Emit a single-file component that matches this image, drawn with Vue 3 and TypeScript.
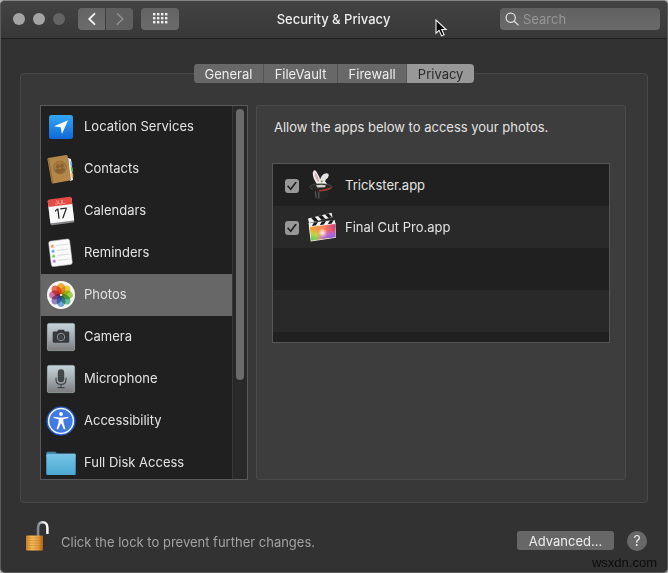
<script setup lang="ts">
import { ref } from 'vue'

interface Service { id: string; label: string }
interface AppEntry { id: string; name: string; allowed: boolean }

const tabs: string[] = ['General', 'FileVault', 'Firewall', 'Privacy']
const activeTab = ref('Privacy')

const services: Service[] = [
  { id: 'location', label: 'Location Services' },
  { id: 'contacts', label: 'Contacts' },
  { id: 'calendars', label: 'Calendars' },
  { id: 'reminders', label: 'Reminders' },
  { id: 'photos', label: 'Photos' },
  { id: 'camera', label: 'Camera' },
  { id: 'microphone', label: 'Microphone' },
  { id: 'accessibility', label: 'Accessibility' },
  { id: 'disk', label: 'Full Disk Access' },
]
const selected = ref('photos')

const apps = ref<AppEntry[]>([
  { id: 'trickster', name: 'Trickster.app', allowed: true },
  { id: 'finalcut', name: 'Final Cut Pro.app', allowed: true },
])

const petals: string[] = ['#f9a01b', '#e8d21d', '#9ccb3b', '#4fb58a', '#5a9bd8', '#8273b8', '#c9609b', '#ef5b45']
const search = ref('')
</script>

<template>
  <main class="window">
    <header class="titlebar">
      <div class="lights">
        <button class="light" aria-label="Close"></button>
        <button class="light" aria-label="Minimize"></button>
        <button class="light dim" aria-label="Zoom" disabled></button>
      </div>
      <div class="history">
        <button class="tool back" aria-label="Back">
          <svg width="10" height="14" viewBox="0 0 10 14"><path d="M7.5 1.8 2.2 7l5.3 5.2" fill="none" stroke="#f4f4f4" stroke-width="1.8" stroke-linecap="round" stroke-linejoin="round" /></svg>
        </button>
        <button class="tool forward" aria-label="Forward" disabled>
          <svg width="10" height="14" viewBox="0 0 10 14"><path d="M2.5 1.8 7.8 7l-5.3 5.2" fill="none" stroke="#8f8f8f" stroke-width="1.6" stroke-linecap="round" stroke-linejoin="round" /></svg>
        </button>
      </div>
      <button class="tool all" aria-label="Show All">
        <svg width="15" height="11" viewBox="0 0 15 11" fill="#f0f0f0">
          <template v-for="r in 3" :key="r">
            <rect v-for="c in 4" :key="c" :x="(c - 1) * 4" :y="(r - 1) * 4" width="2.4" height="2.4" />
          </template>
        </svg>
      </button>
      <h1 class="title">Security &amp; Privacy</h1>
      <label class="search">
        <svg width="14" height="14" viewBox="0 0 14 14" fill="none" stroke="#dcdcdc" stroke-width="1.3" stroke-linecap="round"><circle cx="5.7" cy="5.7" r="4.6" /><path d="m9.2 9.2 3.9 3.7" /></svg>
        <input v-model="search" type="text" placeholder="Search" aria-label="Search" />
      </label>
    </header>

    <div class="content">
      <nav class="tabs" role="tablist">
        <button v-for="tab in tabs" :key="tab" class="tab" role="tab" :class="{ active: tab === activeTab }" :aria-selected="tab === activeTab" @click="activeTab = tab">{{ tab }}</button>
      </nav>

      <section class="group">
        <div class="sidebar">
          <ul class="services">
            <li v-for="s in services" :key="s.id">
              <button class="service" :class="{ selected: s.id === selected }" @click="selected = s.id">
                <svg class="icon" viewBox="0 0 30 30" aria-hidden="true">
                  <template v-if="s.id === 'location'">
                    <defs><linearGradient id="loc" x2="0" y2="1"><stop stop-color="#32a6f5" /><stop offset="1" stop-color="#1168d8" /></linearGradient></defs>
                    <rect x="3" y="3" width="24" height="24" rx="2.5" fill="url(#loc)" />
                    <path d="M22 8.2 16 22l-1.4-6.7L8 14.2z" fill="#fff" />
                  </template>
                  <template v-else-if="s.id === 'contacts'">
                    <path d="m22 4 3 1 2 21-3 1z" fill="#e9edf0" />
                    <path d="m24.2 7 1.7.5.4 4-1.7.4z" fill="#58b6e5" /><path d="m24.8 13 1.9.4.4 4-1.8.3z" fill="#61b848" /><path d="m25.4 19 1.7.3.3 4-1.7.3z" fill="#e1a43a" />
                    <path d="M2.2 3.9 20 1q1.4-.2 1.7 1.2l3.2 23q.1 1-1 1.2L7.2 29.5q-1.3.2-1.6-1.1L1.4 5.2q-.1-1.1.8-1.3z" fill="#b38748" />
                    <path d="m2.6 5 4.1 23.8" stroke="#8c642e" stroke-width="1" />
                    <circle cx="14" cy="13.5" r="6.4" fill="#a67b40" stroke="#936a35" stroke-width=".8" />
                    <g fill="#86602f"><ellipse cx="11.9" cy="12.2" rx="1.7" ry="2.2" /><ellipse cx="16" cy="11.7" rx="1.7" ry="2.2" /><path d="M8.8 17q.5-2.3 3-2.5 1.2 0 2.1.9.8-1.2 2.3-1.4 2.4 0 3 2-1.8 3-4.7 3.4-3.4.3-5.7-2.4z" /></g>
                  </template>
                  <template v-else-if="s.id === 'calendars'">
                    <g transform="rotate(-7 15 15)">
                      <rect x="3" y="4" width="24" height="24" rx="1.5" fill="#85888b" /><rect x="3" y="3" width="24" height="23" rx="1" fill="#f8f8f8" />
                      <path d="M3 9.5V4q0-2 1.5-2h21Q27 2 27 4v5.500z" fill="#e54b43" />
                      <text x="15" y="8.2" text-anchor="middle" font-size="5.500" fill="#ffc5c0">JUL</text>
                      <text x="15" y="22.5" text-anchor="middle" font-size="14" fill="#222">17</text>
                    </g>
                  </template>
                  <template v-else-if="s.id === 'reminders'">
                    <g transform="rotate(-7 15 15)">
                      <rect x="4" y="2" width="21" height="25.500" rx="2" fill="#fafafa" stroke="#ccc" stroke-width=".6" />
                      <path d="M11 7h12M11 12h12M11 17h12M11 22h12" stroke="#cfd2d4" stroke-width=".7" />
                      <g stroke-width=".7"><circle cx="7.3" cy="7.2" r="1.5" fill="#ed9358" stroke="#f5c9a9" /><circle cx="7.3" cy="12.4" r="1.5" fill="#4da2e3" stroke="#b8daf4" /><circle cx="7.3" cy="17.4" r="1.5" fill="#6cc65a" stroke="#c4e8bd" /><circle cx="7.3" cy="22.4" r="1.5" fill="#b175d2" stroke="#dfc5eb" /></g>
                    </g>
                  </template>
                  <template v-else-if="s.id === 'photos'">
                    <circle cx="15" cy="15" r="14" fill="#f7f7f5" />
                    <ellipse v-for="(color, i) in petals" :key="color" class="petal" cx="15" cy="8.8" rx="4.4" ry="5.800" :fill="color" fill-opacity=".85" :transform="`rotate(${i * 45} 15 15)`" />
                    <circle cx="15" cy="15" r="1" fill="#fff" />
                  </template>
                  <template v-else-if="s.id === 'camera' || s.id === 'microphone'">
                    <defs><linearGradient :id="`${s.id}-bg`" x2="0" y2="1"><stop stop-color="#c4d4da" /><stop offset=".55" stop-color="#a1a8ad" /><stop offset="1" stop-color="#7c7b7d" /></linearGradient></defs>
                    <rect x="1.4" y="1.4" width="27.2" height="27.2" rx="1.6" :fill="`url(#${s.id}-bg)`" stroke="#b7c1c5" stroke-width=".6" />
                    <template v-if="s.id === 'camera'">
                      <path d="M8 9.5h3l1.2-1.8h5.6L19 9.5h3q1.3 0 1.3 1.3v8.700q0 1.3-1.3 1.3H8q-1.3 0-1.3-1.3v-8.700q0-1.3 1.3-1.3z" fill="#36393b" />
                      <circle cx="15" cy="15" r="3.7" fill="#303436" stroke="#9ca3a7" stroke-width=".9" /><circle cx="15" cy="15" r="2" fill="#454b4e" />
                    </template>
                    <template v-else>
                      <rect x="11.8" y="5.2" width="6.4" height="13" rx="3.2" fill="#3f4548" />
                      <path d="M10 13.7v1.8q0 5 5 5t5-5v-1.8M15 20.5v2.7M11.5 23.600h7" fill="none" stroke="#3f4548" stroke-width="1.2" />
                      <path d="M13 8h4M13 10.3h4M13 12.6h4" stroke="#596064" stroke-width=".5" />
                    </template>
                  </template>
                  <template v-else-if="s.id === 'accessibility'">
                    <circle cx="15" cy="15" r="14.6" fill="#265ec7" />
                    <circle cx="15" cy="15" r="12.4" fill="#3f7be2" stroke="#f2f6ff" stroke-width="1.5" />
                    <circle cx="15" cy="8" r="1.9" fill="#fff" />
                    <path d="m7.800 10.700 5.400.7h3.600l5.400-.7.2 1.300-5.100 1.200.2 3.300 1.900 6.500-1.500.6-2.500-5.900h-.8l-2.500 5.900-1.500-.6 1.900-6.500.2-3.300-5.100-1.200z" fill="#fff" />
                  </template>
                  <template v-else>
                    <defs><linearGradient id="folder" x2="0" y2="1"><stop stop-color="#76c4e7" /><stop offset="1" stop-color="#4ba8d2" /></linearGradient></defs>
                    <path d="M.4 6V4.700q0-1 1-1h7.800q.8 0 1.500 1.500h17.900q1 0 1 1V9H.4z" fill="#4286a8" />
                    <rect x=".3" y="6.200" width="29.4" height="20.800" rx="1" fill="url(#folder)" />
                    <path d="M.8 6.700h28.4" stroke="#91d2ed" stroke-width=".6" />
                  </template>
                </svg>
                <span>{{ s.label }}</span>
              </button>
            </li>
          </ul>
          <div class="track"><div class="thumb"></div></div>
        </div>

        <div class="panel">
          <p class="prompt">Allow the apps below to access your photos.</p>
          <ul class="apps">
            <li v-for="app in apps" :key="app.id">
              <label class="app">
                <input v-model="app.allowed" class="check" type="checkbox" />
                <svg v-if="app.id === 'trickster'" class="icon" viewBox="0 0 30 30" aria-hidden="true">
                  <path d="M10.500 15Q4.800 7 6 2 7.200-1.200 9.500 1.700q3 4.300 4.800 11.300z" fill="#eee9e9" />
                  <path d="M11.2 12Q7.400 6.500 7.900 2.600q2.300 2 4.400 8.900z" fill="#d9a3ad" />
                  <path d="M12.500 13Q12.800 6.500 17.300 3.800q4.600-1.600 4.500 1.800-.3 2.200-3.200 4.100L17.500 15z" fill="#e5e3e2" />
                  <path d="M10 16.800q-.4-4.900 4-5.500 5.900-.4 6.400 4.300l-2 1.900z" fill="#f4f1ef" /><ellipse cx="14.800" cy="11.400" rx="1.100" ry=".9" fill="#6c9034" />
                  <ellipse cx="14" cy="17" rx="11.200" ry="3.300" fill="#282828" stroke="#5d5d5d" stroke-width=".6" />
                  <path d="M9 15.300q5.700-1.200 10 .1l-1 1.800-7.700.2z" fill="#d8d2cf" />
                  <path d="M5.900 18q8.200 3.200 16.200-.2l-1 10.400q-6 3.600-13.300.5z" fill="#242424" />
                  <path d="M12 20q7.300-.4 12.300-3.500l-1.700 3q-4.900 2.100-10.600 2.100z" fill="#b73730" />
                  <path d="M8.500 21.200q.1 4.400.8 6.700M11.800 21.800v6.700" fill="none" stroke="#595959" stroke-width="1.200" />
                </svg>
                <svg v-else class="icon" viewBox="0 0 30 30" aria-hidden="true">
                  <defs>
                    <linearGradient id="clap" x2="1" y2="0"><stop stop-color="#eea52c" /><stop offset=".5" stop-color="#f48a58" /><stop offset="1" stop-color="#df3b77" /></linearGradient>
                    <radialGradient id="green" cx="0" cy="1" r=".8"><stop stop-color="#27d75e" /><stop offset=".55" stop-color="#b8df4f" stop-opacity=".8" /><stop offset="1" stop-color="#e9b54f" stop-opacity="0" /></radialGradient>
                    <radialGradient id="violet" cx=".9" cy="1" r=".7"><stop stop-color="#4b61ef" /><stop offset=".6" stop-color="#b66bea" stop-opacity=".8" /><stop offset="1" stop-color="#df5ba0" stop-opacity="0" /></radialGradient>
                    <radialGradient id="glow"><stop stop-color="#fff" stop-opacity=".9" /><stop offset="1" stop-color="#fff" stop-opacity="0" /></radialGradient>
                  </defs>
                  <path d="m1 6.400 23.600-5.600.9 4.500L2 11z" fill="#f0f0ef" />
                  <path d="m4 5.700 3.700-.9 3.600 3.900-3.800.9zM11 4l3.800-.9L18.400 7l-3.700.9zM18 2.400l3.700-.9 3.400 3.700-3.500.9z" fill="#18191b" />
                  <path d="M1.500 11 27.600 8l1 4.300L2.200 15.500z" fill="#f0f0ef" />
                  <path d="m4 15.200 3-4.800 4-.5-3 4.900zM12 14.300l3-4.900 4-.5-3 4.900zM20 13.300l3-4.800 3.800-.5-3 4.900z" fill="#18191b" />
                  <path d="m1.800 14.300 26.600-3 .5 14.400-25.200 3.700z" fill="#f2efed" />
                  <path d="m2.900 14.900 25-2.800.4 12.900-23.800 3.400z" fill="url(#clap)" /><path d="m2.900 14.900 25-2.800.4 12.900-23.800 3.400z" fill="url(#green)" /><path d="m2.900 14.900 25-2.800.4 12.900-23.800 3.400z" fill="url(#violet)" />
                  <circle cx="15.600" cy="20.700" r="4.500" fill="url(#glow)" />
                </svg>
                <span>{{ app.name }}</span>
              </label>
            </li>
          </ul>
        </div>
      </section>

      <footer class="footer">
        <button class="lock" aria-label="Lock">
          <svg width="32" height="32" viewBox="0 0 32 32">
            <defs>
              <linearGradient id="brass"><stop stop-color="#d48127" /><stop offset=".35" stop-color="#f7bd5e" /><stop offset=".75" stop-color="#e39b3a" /><stop offset="1" stop-color="#a96216" /></linearGradient>
              <linearGradient id="steel"><stop stop-color="#7c868d" /><stop offset=".5" stop-color="#d8e0e4" /><stop offset="1" stop-color="#fff" /></linearGradient>
            </defs>
            <path d="M18 17V9q0-5.700 4.700-5.700T27.400 9v6" fill="none" stroke="url(#steel)" stroke-width="2.500" />
            <rect x="6" y="16.500" width="17" height="15" rx=".7" fill="url(#brass)" />
            <path d="M6 19h17M6 21.500h17M6 24h17M6 26.500h17M6 29h17" stroke="#a96519" stroke-opacity=".55" stroke-width=".7" />
          </svg>
        </button>
        <p class="hint">Click the lock to prevent further changes.</p>
        <div class="actions">
          <button class="advanced">Advanced...</button>
          <button class="help" aria-label="Help">?</button>
        </div>
      </footer>
    </div>

    <span class="watermark">wsxdn.com</span>
    <svg class="pointer" width="13" height="19" viewBox="0 0 13 19" aria-hidden="true"><path d="M1 1v13.200l3.100-2.800 2.400 5.500 2.600-1.100-2.400-5.300h4.400z" fill="#080808" stroke="#f1f1f1" stroke-width="1.100" /></svg>
  </main>
</template>

<style>
body { background: #b5b5b5; }
</style>

<style scoped>
* { box-sizing: border-box; }
.window {
  position: relative;
  min-height: 100vh;
  border: 1px solid #5c5c5c;
  border-top-color: #858585;
  border-radius: 5px;
  overflow: hidden;
  background: #323232;
  color: #e3e3e3;
  font: 13px/16px Inter, "Liberation Sans", sans-serif;
}
button, input { font: inherit; color: inherit; margin: 0; }
button { border: 0; padding: 0; background: none; }
ul { list-style: none; margin: 0; padding: 0; }
p, h1 { margin: 0; }
svg { display: block; flex: none; }
.titlebar {
  display: grid;
  grid-template-columns: auto auto auto 1fr 160px;
  align-items: center;
  height: 38px;
  padding: 0 7px 2px 12px;
  border-bottom: 1px solid #202020;
  background: linear-gradient(#434343, #383838);
}
.lights { display: flex; gap: 8px; margin-right: 13px; }
.light { width: 12px; height: 12px; border-radius: 50%; background: #a4a4a4; }
.light.dim { background: #646464; }
.history { display: flex; gap: 1px; margin-right: 8px; }
.tool {
  display: flex;
  align-items: center;
  justify-content: center;
  width: 27px;
  height: 22px;
  background: linear-gradient(#646464, #6b6b6b);
}
.back { border-radius: 4px 0 0 4px; }
.forward { border-radius: 0 4px 4px 0; background: #5f5f5f; }
.all { width: 38px; border-radius: 4px; }
.title { padding-right: 12px; text-align: center; font-size: 13px; font-weight: 500; color: #ececec; }
.search {
  display: flex;
  align-items: center;
  gap: 4px;
  height: 22px;
  padding: 0 5px;
  border-radius: 4px;
  background: linear-gradient(#606060, #6b6b6b);
}
.search input { flex: 1; min-width: 0; border: 0; padding: 0; outline: 0; background: none; }
.search input::placeholder { color: #969696; opacity: 1; }
.content { padding: 25px 19px 0; }
.tabs {
  position: relative;
  z-index: 1;
  display: flex;
  gap: 1px;
  width: 280px;
  margin: 0 auto;
  border-radius: 4px;
  overflow: hidden;
  background: #555;
}
.tab { flex: 1 1 auto; height: 19px; background: #686868; color: #ededed; }
.tab.active { background: #989898; color: #292929; }
.group {
  display: flex;
  gap: 8px;
  margin-top: -10px;
  padding: 31px 21px 22px 19px;
  border: 1px solid #484848;
  border-radius: 4px;
  background: #383838;
}
.sidebar {
  display: flex;
  flex: none;
  width: 208px;
  height: 375px;
  border: 1px solid #5a5a5a;
  overflow: hidden;
  background: #202020;
}
.services { flex: 1; }
.service { display: flex; align-items: center; gap: 8px; width: 100%; height: 42px; padding-left: 5px; text-align: left; }
.service span { padding-bottom: 2px; }
.service.selected { background: #676767; }
.icon { width: 30px; height: 30px; }
.petal { mix-blend-mode: multiply; }
.track { width: 15px; padding: 3px 3px 0; border-left: 1px solid #383838; background: #292929; }
.thumb { height: 271px; width: 8px; border-radius: 4px; background: #6b6b6b; }
.panel { flex: 1; padding: 13px 15px 0; border: 1px solid #4b4b4b; border-radius: 3px; background: #3d3d3d; }
.prompt { padding-left: 2px; }
.apps {
  height: 180px;
  margin-top: 28px;
  border: 1px solid #565656;
  background: repeating-linear-gradient(#202020 0 42px, #292929 42px 84px);
}
.app { display: flex; align-items: center; gap: 8px; height: 42px; padding-left: 12px; }
.check {
  appearance: none;
  display: grid;
  place-items: center;
  width: 14px;
  height: 14px;
  margin-top: 2px;
  border-radius: 3px;
  background: #989898;
}
.check:checked::before {
  content: "";
  width: 10px;
  height: 9px;
  background: #202020;
  clip-path: polygon(0 54%, 12% 43%, 36% 72%, 86% 0, 98% 10%, 38% 100%);
}
.footer { display: flex; align-items: center; margin-top: 16px; }
.lock { margin-right: 9px; }
.hint { padding-top: 13px; color: #a2a2a2; }
.actions { display: flex; align-items: center; gap: 13px; margin-left: auto; padding: 11px 1px 0 0; }
.advanced { width: 97px; height: 19px; border-radius: 3px; background: #676767; color: #ededed; }
.help { width: 20px; height: 20px; border-radius: 50%; background: #686868; font-size: 14px; color: #eee; }
.watermark { position: absolute; right: 10px; bottom: 1px; font: 13px/16px "Liberation Sans", Arial, sans-serif; color: #0c0c0c; }
.pointer { position: absolute; left: 434px; top: 18px; }
</style>
